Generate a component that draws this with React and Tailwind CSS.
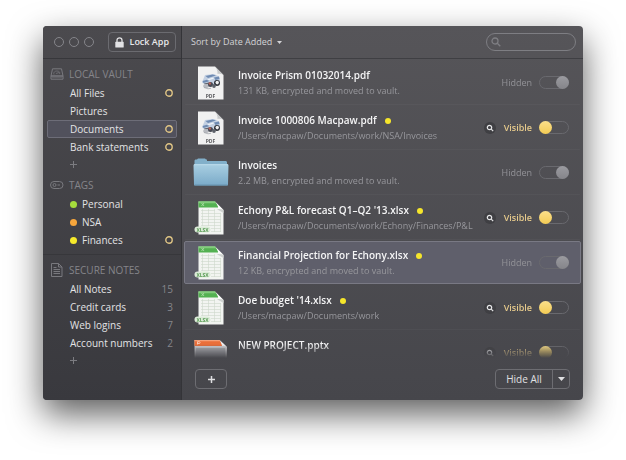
import { useState } from "react";

function DriveIcon() {
  return (
    <svg className="h-3 w-[14px]" viewBox="0 0 14 12" fill="none" stroke="#79797e">
      <path d="M2.5 .8h9L13 8H1z" />
      <path d="M1 8h12v3.2H1z" />
      <path d="M4 6.5c-1-2 1-3.500 3-3.500s3.500 1.500 2.500 3M6 5.500l3-1" strokeWidth="0.7" />
      <path d="M2.500 9.600h9" strokeDasharray="1 1" />
    </svg>
  );
}

function TagIcon() {
  return (
    <svg className="h-3 w-[14px]" viewBox="0 0 14 12" fill="none" stroke="#79797e">
      <rect x="0.5" y="2.500" width="12.5" height="7" rx="3.5" />
      <circle cx="4.5" cy="6" r="1.5" />
      <path d="M7.500 6h2.500" />
    </svg>
  );
}

function NotesIcon() {
  return (
    <svg className="h-[14px] w-[14px]" viewBox="0 0 14 14" fill="none" stroke="#79797e">
      <path d="M1.500 .5h7L12 4v9.500H1.500z" />
      <path d="M8.500 .5V4H12M3.500 4.500h3M3.500 6.500h6.500M3.500 8.500h6.500M3.500 10.500h6.500" />
    </svg>
  );
}

function LockIcon() {
  return (
    <svg className="h-[11px] w-[9px]" viewBox="0 0 9 11" fill="none">
      <path d="M2 5.500V3.300a2.500 2.500 0 0 1 5 0V5.500" stroke="#e2e2e4" strokeWidth="1.3" />
      <rect x="0.3" y="4.8" width="8.4" height="5.7" rx="0.6" fill="#e2e2e4" />
    </svg>
  );
}

function PlusIcon({ className }) {
  return (
    <svg className={className} viewBox="0 0 9 9" fill="none" stroke="currentColor">
      <path d="M4.500 1v7M1 4.500h7" />
    </svg>
  );
}

function PdfIcon() {
  return (
    <svg className="h-[34px] w-[36px]" viewBox="0 0 36 34">
      <path d="M5 .5h17L30.500 9V33.500H5z" fill="#f1f1f1" />
      <path d="M22 .5 30.500 9c-2-1.200-4-1.500-6-1 .3-3-.8-5.500-2.500-7.500z" fill="#c6c8c9" />
      <path d="m12 9 9-1 5 2.500 1 4-3 4-11 1-4-3z" fill="#c3d0e2" />
      <path d="m12.500 10 7-1.500 3.500 1-8 2.500zM9.500 15l7-2-1 2.500-5 1.500zM21 11.500l5-1 .5 2.500-4 1z" fill="#6f8bb2" />
      <path d="m14 13.500 6-2 1 1-6 2z" fill="#eef3f9" />
      <path d="m11 17.500 5-1 1 1-5 1.200z" fill="#62666f" />
      <ellipse cx="13" cy="20" rx="2.8" ry="2" fill="#b9bbc1" />
      <circle cx="17.5" cy="18.5" r="2.5" fill="#474a54" />
      <circle cx="16.8" cy="17.5" r="1.2" fill="#b8645c" />
      <circle cx="24" cy="17" r="3" fill="#30333a" />
      <ellipse cx="24.2" cy="16.6" rx="1.7" ry="1.8" fill="#eeeeef" />
      <ellipse cx="21" cy="20" rx="1.8" ry="2" fill="#5d616a" />
      <path d="m11 21.500 4 1.300 3-.5" stroke="#9a9ca4" strokeWidth="0.7" fill="none" />
      <text x="17.5" y="31.5" textAnchor="middle" fill="#5a5a5d" fontSize="5" fontWeight="700">PDF</text>
    </svg>
  );
}

function FolderIcon() {
  return (
    <svg className="h-[34px] w-[36px]" viewBox="0 0 36 34">
      <defs>
        <linearGradient id="folder" x1="0" y1="0" x2="0" y2="1">
          <stop offset="0" stopColor="#a9cfe2" />
          <stop offset="1" stopColor="#7aaac8" />
        </linearGradient>
      </defs>
      <path d="M1.500 5c0-1 .5-1.500 1.500-1.500h1l1-1h7l1 1h1v1.500h18.500c.8 0 1.500.5 1.500 1.500v20H1.500z" fill="#82b0ca" />
      <path d="M.5 9.500c0-.8.5-1.200 1.200-1.200h32.600c.7 0 1.200.4 1.200 1.200L35 28.500c0 .7-.5 1-1 1H2c-.6 0-1-.3-1-1z" fill="url(#folder)" />
      <path d="M1 8.700h34" stroke="#c1e0ee" strokeWidth="0.8" />
      <path d="M1.500 29h33" stroke="#6893ae" />
    </svg>
  );
}

function SheetIcon() {
  return (
    <svg className="h-[34px] w-[36px]" viewBox="0 0 36 34">
      <path d="M5.500 .5h16.500L30.500 9V33.500H5.500z" fill="#f2f4f1" />
      <path d="M5.500 .5H22l4 6H5.500z" fill="#54b152" />
      <path d="M5.500 .5H22l1.200 1.800H5.500z" fill="#82cc7c" />
      <path d="m8.500 2 2.500 3M11 2 8.500 5" stroke="#b5e0af" strokeWidth="0.800" />
      <path d="M22 .5 30.500 9c-2-1.500-3.500-1.500-5.500-1 .5-3-1-5.500-3-7.500z" fill="#fafbfa" />
      <path d="M24 8.300c2-.8 4.500-.4 6.500.7v3z" fill="#cfd2d0" />
      <path d="M8 9.500h14M8 12.500h20M8 15.500h20M8 18.500h20M8 21.500h20M8 24.500h20M18 27.500h10M18 30.500h10M9.500 8v17M15.500 8v17M21.500 8v23M27.500 12v19" stroke="#cdd6cb" strokeWidth="0.6" />
      <rect x="1.500" y="25.500" width="16" height="6" rx="3" fill="#dcebd8" />
      <text x="9.5" y="30.5" textAnchor="middle" fill="#5a9c56" fontSize="5" fontWeight="700">XLSX</text>
    </svg>
  );
}

function SlidesIcon() {
  return (
    <svg className="h-[34px] w-[36px]" viewBox="0 0 36 34">
      <path d="M1.500 4h25L34 11v21H1.500z" fill="#d6d6d9" />
      <path d="M1.500 4h25l3 6H1.500z" fill="#ea6f3a" />
      <path d="M1.500 4h25l1 1.300h-26z" fill="#f5a078" />
      <path d="M4.500 8.500V5.700h2a1 1 0 0 1 0 1.800h-2" stroke="#fbd9c6" fill="none" strokeWidth="0.8" />
      <path d="M26.500 4 34 11c-1.500-1-3.500-1-5-.8 0-2.500-1-4.700-2.500-6.200z" fill="#f2f2f3" />
      <path d="M3 12h29v10H3z" fill="#b4b5ba" />
    </svg>
  );
}

const icons = { pdf: PdfIcon, folder: FolderIcon, xlsx: SheetIcon, pptx: SlidesIcon };

const files = [
  { name: "Invoice Prism 01032014.pdf", info: "131 KB, encrypted and moved to vault.", type: "pdf", hidden: true },
  { name: "Invoice 1000806 Macpaw.pdf", info: "/Users/macpaw/Documents/work/NSA/Invoices", type: "pdf", tagged: true },
  { name: "Invoices", info: "2.2 MB, encrypted and moved to vault.", type: "folder", hidden: true },
  { name: "Echony P&L forecast Q1–Q2 '13.xlsx", info: "/Users/macpaw/Documents/work/Echony/Finances/P&L", type: "xlsx", tagged: true },
  { name: "Financial Projection for Echony.xlsx", info: "12 KB, encrypted and moved to vault.", type: "xlsx", tagged: true, hidden: true, selected: true },
  { name: "Doe budget '14.xlsx", info: "/Users/macpaw/Documents/work", type: "xlsx", tagged: true },
  { name: "NEW PROJECT.pptx", info: "", type: "pptx" },
];

function SectionTitle({ icon, children }) {
  return (
    <h2 className="flex h-5 items-center gap-[5px] pl-[7px] text-[10px] text-[#85858a]">
      <span className="flex w-[14px] justify-center">{icon}</span>
      {children}
    </h2>
  );
}

function NavItem({ label, color, ring, count, active }) {
  return (
    <li>
      <a
        href="#"
        aria-current={active ? "page" : undefined}
        className={`mx-1 flex h-[18px] items-center rounded-[2px] border pr-[3px] pl-[22px] text-[10px] font-medium text-[#e3e3e5] ${
          active ? "border-[#6d6d78] bg-[#51515c]" : "border-transparent"
        }`}
      >
        {color && <span className={`mr-[5px] size-[7px] rounded-full ${color}`} />}
        <span className="flex-1 whitespace-nowrap">{label}</span>
        {ring && (
          <svg className="size-2" viewBox="0 0 8 8" fill="none" stroke="#e0c585" strokeWidth="1.4">
            <circle cx="4" cy="4" r="3.2" />
          </svg>
        )}
        {count && <span className="font-normal text-[#85858a]">{count}</span>}
      </a>
    </li>
  );
}

function AddItem({ label }) {
  return (
    <button type="button" aria-label={label} className="ml-[26px] flex h-4 items-center text-[#7c7c81]">
      <PlusIcon className="size-[9px]" />
    </button>
  );
}

function FileRow({ file }) {
  const [hidden, setHidden] = useState(!!file.hidden);
  const Icon = icons[file.type];
  return (
    <li
      className={`mx-[2px] flex items-center rounded-[2px] border pr-[11px] pl-2 ${
        file.selected ? "my-px h-[43px] border-[#797984] bg-[#5f5f6b]" : "h-[45px] border-transparent border-b-white/3"
      }`}
    >
      <Icon />
      <div className="ml-[9px] min-w-0 flex-1">
        <p className="flex h-4 items-center gap-2 text-[10px] font-semibold whitespace-nowrap text-[#f4f4f5]">
          {file.name}
          {file.tagged && <span className="size-[6px] rounded-full bg-[#f6e62b]" />}
        </p>
        <p className="h-[14px] text-[9px] leading-[14px] whitespace-nowrap text-[#97979c]">{file.info}</p>
      </div>
      {!hidden && (
        <button type="button" aria-label={`Preview ${file.name}`} className="mr-2 flex size-3 items-center justify-center rounded-full bg-[#3f3f43] text-[#e6e6e8]">
          <svg className="size-2" viewBox="0 0 8 8" fill="none" stroke="currentColor" strokeWidth="1.2">
            <circle cx="3.5" cy="3.5" r="2.2" />
            <path d="m5.200 5.200 2 2" />
          </svg>
        </button>
      )}
      <label className={`flex items-center gap-[7px] text-[9px] ${hidden ? "text-[#929297]" : "font-semibold text-[#e5c98b]"}`}>
        {hidden ? "Hidden" : "Visible"}
        <input
          type="checkbox"
          checked={hidden}
          onChange={(event) => setHidden(event.target.checked)}
          className="flex h-[13px] w-[30px] appearance-none items-center rounded-full border border-[#69696e] before:-mx-px before:size-[13px] before:shrink-0 before:rounded-full before:bg-linear-to-b before:from-[#fbe08a] before:to-[#f3cb52] checked:justify-end checked:before:from-[#9b9ba0] checked:before:to-[#85858a]"
        />
      </label>
    </li>
  );
}

export default function App() {
  return (
    <div className="min-h-screen overflow-hidden bg-white px-[43px] pt-[26px] pb-[60px] font-['Open_Sans','Noto_Sans',sans-serif]">
      <main className="flex overflow-hidden rounded-[4px] bg-linear-to-b from-[#565559] to-[#46464b] shadow-[0_14px_34px_rgba(0,0,0,0.64)]">
        <aside className="w-[139px] shrink-0 border-r border-[#343438] bg-linear-to-b from-[#4b4a4e] to-[#39393e]">
          <header className="flex h-[33px] items-center justify-between border-b border-[#37373b] pr-[5px] pl-[11px]">
            <div className="flex gap-[5px]">
              <button type="button" aria-label="Close" className="size-[10px] rounded-full border border-[#85858a]" />
              <button type="button" aria-label="Minimize" className="size-[10px] rounded-full border border-[#85858a]" />
              <button type="button" aria-label="Zoom" className="size-[10px] rounded-full border border-[#85858a]" />
            </div>
            <button type="button" className="flex h-5 items-center gap-[5px] rounded-[4px] border border-[#6b6b70] px-[6px] text-[9px] font-semibold whitespace-nowrap text-[#e8e8ea]">
              <LockIcon />
              Lock App
            </button>
          </header>
          <nav>
            <section className="pt-[5px]">
              <SectionTitle icon={<DriveIcon />}>LOCAL VAULT</SectionTitle>
              <ul>
                <NavItem label="All Files" ring />
                <NavItem label="Pictures" />
                <NavItem label="Documents" ring active />
                <NavItem label="Bank statements" ring />
              </ul>
              <AddItem label="Add folder" />
            </section>
            <section className="pt-[3px] pb-[5px]">
              <SectionTitle icon={<TagIcon />}>TAGS</SectionTitle>
              <ul>
                <NavItem label="Personal" color="bg-[#a5dc3c]" />
                <NavItem label="NSA" color="bg-[#f7a63c]" />
                <NavItem label="Finances" color="bg-[#f6ea2b]" ring />
              </ul>
            </section>
            <section className="border-t border-[#37373b] pt-[5px]">
              <SectionTitle icon={<NotesIcon />}>SECURE NOTES</SectionTitle>
              <ul>
                <NavItem label="All Notes" count={15} />
                <NavItem label="Credit cards" count={3} />
                <NavItem label="Web logins" count={7} />
                <NavItem label="Account numbers" count={2} />
              </ul>
              <AddItem label="Add note" />
            </section>
          </nav>
        </aside>
        <section className="flex min-w-0 flex-1 flex-col">
          <header className="flex h-[33px] shrink-0 items-center justify-between border-b border-[#3f3f43] pr-[7px] pl-[9px]">
            <button type="button" className="flex items-center gap-[5px] text-[9px] font-medium text-[#d3d3d6]">
              Sort by Date Added
              <svg className="h-[3px] w-[5px]" viewBox="0 0 5 3" fill="currentColor">
                <path d="M0 0h5L2.500 3z" />
              </svg>
            </button>
            <label className="flex h-[18px] w-[90px] items-center gap-1 rounded-full border border-[#7e7e83] px-1 text-[#7e7e83]">
              <svg className="size-[10px] shrink-0" viewBox="0 0 10 10" fill="none" stroke="currentColor" strokeWidth="1.3">
                <circle cx="4" cy="4" r="3" />
                <path d="m6.300 6.300 3 3" />
              </svg>
              <input type="search" aria-label="Search" className="w-full min-w-0 bg-transparent text-[9px] text-[#e3e3e5] outline-none" />
            </label>
          </header>
          <ul className="max-h-[299px] overflow-hidden pt-px [mask-image:linear-gradient(to_bottom,black_285px,transparent_299px)]">
            {files.map((file) => (
              <FileRow key={file.name} file={file} />
            ))}
          </ul>
          <footer className="flex items-center justify-between px-[13px] pt-[11px] pb-[11px]">
            <button type="button" aria-label="Add file" className="flex h-5 w-8 items-center justify-center rounded-[4px] border border-[#6d6d72] text-[#dedee0]">
              <PlusIcon className="size-[9px] stroke-[1.5px]" />
            </button>
            <div className="flex h-5 rounded-[4px] border border-[#6d6d72] text-[#e0e0e2]">
              <button type="button" className="w-14 text-[10px] font-medium">Hide All</button>
              <button type="button" aria-label="More actions" className="flex w-[17px] items-center justify-center border-l border-[#6d6d72]">
                <svg className="h-1 w-[7px]" viewBox="0 0 7 4" fill="currentColor">
                  <path d="M0 0h7L3.500 4z" />
                </svg>
              </button>
            </div>
          </footer>
        </section>
      </main>
    </div>
  );
}
